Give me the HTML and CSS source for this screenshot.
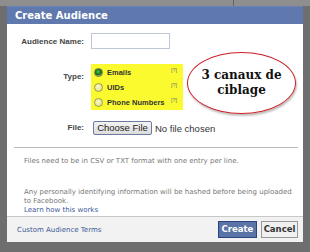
FILE: index.html
```html
<!DOCTYPE html>
<html>
<head>
<meta charset="utf-8">
<link rel="stylesheet" href="styles.css">
</head>
<body>
<div class="topstrip"><span class="seg"></span><span class="seg2"></span></div>
<div class="dialog">
  <div class="header">Create Audience</div>
  <div class="content">
    <div class="form">
      <div class="lbl lbl-name">Audience Name:</div>
      <div class="ctl"><span class="input"></span></div>
      <div class="lbl lbl-type">Type:</div>
      <div class="ctl">
        <div class="types">
          <div class="opt"><span class="radio on"></span><span class="optname">Emails</span><span class="help">[?]</span></div>
          <div class="opt"><span class="radio"></span><span class="optname">UIDs</span><span class="help">[?]</span></div>
          <div class="opt"><span class="radio"></span><span class="optname">Phone Numbers</span><span class="help">[?]</span></div>
        </div>
      </div>
      <div class="lbl lbl-file">File:</div>
      <div class="ctl filectl"><span class="choose">Choose File</span><span class="nofile">No file chosen</span></div>
    </div>
    <div class="divider"></div>
    <p class="note first">Files need to be in CSV or TXT format with one entry per line.</p>
    <p class="note second">Any personally identifying information will be hashed before being uploaded<br>to Facebook.<br><a class="link">Learn how this works</a></p>
    <div class="callout">3 canaux de<br>ciblage</div>
  </div>
  <div class="footer">
    <a class="link terms">Custom Audience Terms</a>
    <div class="buttons">
      <span class="btn create">Create</span>
      <span class="btn cancel">Cancel</span>
    </div>
  </div>
</div>
</body>
</html>
```
FILE: styles.css
```css
html, body {
  margin: 0;
  padding: 0;
}
body {
  width: 310px;
  height: 252px;
  background: #6e6e6e;
  overflow: hidden;
  font-family: "DejaVu Sans", sans-serif;
}
.topstrip {
  height: 6px;
  background: #8e8e8e;
  display: flex;
}
.seg { width: 233px; border-right: 1px solid #666; }
.seg2 { flex: 1; }
.dialog {
  margin-left: 7px;
  width: 296px;
  position: relative;
}
.header {
  height: 17px;
  background: #5f78ad;
  border-top: 1px solid #6a82b6;
  color: #fff;
  font-weight: bold;
  font-size: 10px;
  line-height: 17px;
  padding-left: 8px;
}
.content {
  background: #fff;
  padding: 9px 5px 1px 7px;
  position: relative;
}
.form {
  display: grid;
  grid-template-columns: 70px 1fr;
  column-gap: 7px;
  row-gap: 0;
}
.lbl {
  text-align: right;
  font-family: "Liberation Sans", sans-serif;
  font-weight: bold;
  font-size: 8px;
  color: #444;
}
.lbl-name { line-height: 17px; }
.lbl-type { padding-top: 21px; line-height: 12px; }
.lbl-file { padding-top: 11px; line-height: 14px; }
.ctl { display: flex; }
.input {
  width: 77px;
  height: 14px;
  border: 1px solid #bdc7d8;
  background: #fff;
}
.types {
  margin-top: 14px;
  width: 92px;
  height: 46px;
  padding-top: 1px;
  box-sizing: border-box;
  background: #fafa2e;
  display: flex;
  flex-direction: column;
}
.opt {
  height: 15px;
  flex: none;
  display: flex;
  align-items: center;
  font-family: "Liberation Sans", sans-serif;
  font-size: 7.5px;
  font-weight: bold;
  color: #333;
  white-space: nowrap;
}
.radio {
  width: 7px;
  height: 7px;
  border-radius: 50%;
  border: 1px solid #9c9c4a;
  background: radial-gradient(circle at 40% 35%, #fbfbc8, #d8d880);
  margin-left: 3px;
  margin-right: 4px;
  position: relative;
  flex: none;
}
.radio.on {
  background: radial-gradient(circle at 45% 40%, #58c058 0, #127a12 45%, #2a5a2a 60%, #c8c890 70%);
  border-color: #6a7a3a;
}
.optname { flex: 1; }
.help {
  font-size: 5.5px;
  font-weight: normal;
  color: #777;
  margin-right: 6px;
  margin-top: -5px;
}
.filectl {
  margin-top: 11px;
  align-items: center;
  font-family: "Liberation Sans", sans-serif;
  font-size: 9.5px;
  color: #333;
}
.choose {
  display: inline-block;
  width: 57px;
  height: 12px;
  line-height: 12px;
  border: 1px solid #6c7aa0;
  border-radius: 2px;
  background: linear-gradient(#f4f4f4, #dcdcdc);
  color: #222;
  text-align: center;
  margin-left: 2px;
  margin-right: 3px;
}
.divider {
  margin-top: 12px;
  height: 1px;
  background: #bbb;
}
.note {
  margin: 0;
  padding-left: 10px;
  font-size: 7px;
  color: #777;
  line-height: 9px;
}
.note.first { margin-top: 9px; }
.note.second { margin-top: 22px; }
.link {
  color: #3b5998;
  text-decoration: none;
}
.callout {
  position: absolute;
  left: 180px;
  top: 28px;
  width: 107px;
  height: 60px;
  border: 1.5px solid #cc1f24;
  border-radius: 50%;
  box-shadow: 1px 2px 2px rgba(0,0,0,0.25);
  display: flex;
  align-items: center;
  justify-content: center;
  text-align: center;
  font-family: "DejaVu Serif", serif;
  font-weight: bold;
  font-size: 12px;
  line-height: 15px;
  color: #111;
}
.footer {
  height: 25px;
  background: #f2f2f2;
  border-top: 1px solid #c8c8c8;
  display: flex;
  align-items: center;
  justify-content: space-between;
  padding: 0 5px 0 10px;
}
.terms { font-size: 7px; }
.buttons { display: flex; gap: 4px; }
.btn {
  display: inline-block;
  height: 15px;
  line-height: 15px;
  padding: 0;
  font-size: 8.5px;
  font-weight: bold;
  text-align: center;
}
.create {
  width: 37px;
  background: #5b74a8;
  border: 1px solid #29447e;
  color: #fff;
}
.cancel {
  width: 35px;
  background: #f0f0f0;
  border: 1px solid #999;
  color: #333;
}
```
